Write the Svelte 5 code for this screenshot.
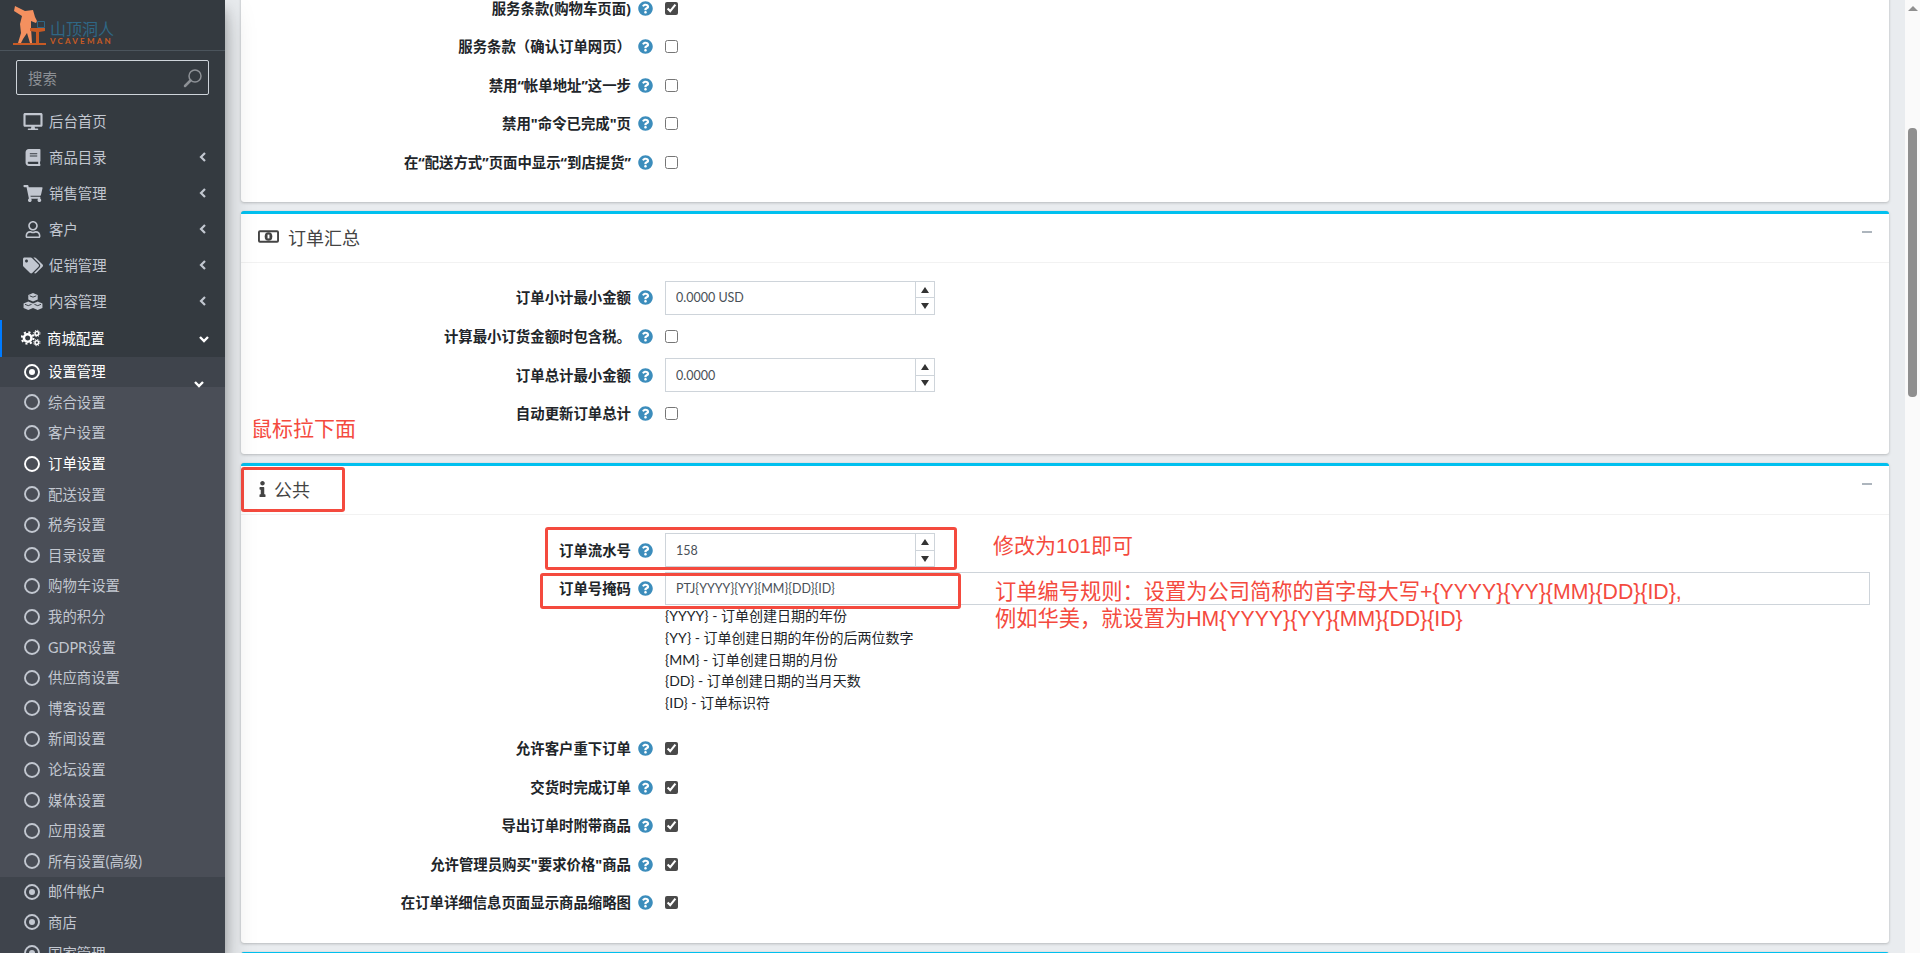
<script>
	const paths = {
		help: 'M504 256c0 136.997-111.043 248-248 248S8 392.997 8 256C8 119.083 119.043 8 256 8s248 111.083 248 248zM262.655 90c-54.497 0-89.255 22.957-116.549 63.758-3.536 5.286-2.353 12.415 2.715 16.258l34.699 26.31c5.205 3.947 12.621 3.008 16.665-2.122 17.864-22.658 30.113-35.797 57.303-35.797 20.429 0 45.698 13.148 45.698 32.958 0 14.976-12.363 22.667-32.534 33.976C247.128 238.528 216 254.941 216 296v4c0 6.627 5.373 12 12 12h56c6.627 0 12-5.373 12-12v-1.333c0-28.462 83.186-29.647 83.186-106.667 0-58.002-60.165-102-116.531-102zM256 338c-25.365 0-46 20.635-46 46 0 25.364 20.635 46 46 46s46-20.636 46-46c0-25.365-20.635-46-46-46z',
		desktop: 'M528 0H48C21.5 0 0 21.5 0 48v320c0 26.5 21.5 48 48 48h192l-16 48h-72c-13.3 0-24 10.7-24 24s10.7 24 24 24h272c13.3 0 24-10.7 24-24s-10.7-24-24-24h-72l-16-48h192c26.5 0 48-21.5 48-48V48c0-26.5-21.5-48-48-48zm-16 352H64V64h448v288z',
		book: 'M448 360V24c0-13.3-10.7-24-24-24H96C43 0 0 43 0 96v320c0 53 43 96 96 96h328c13.3 0 24-10.7 24-24v-16c0-7.5-3.5-14.3-8.9-18.7-4.2-15.4-4.2-59.3 0-74.7 5.4-4.3 8.9-11.1 8.9-18.6zM128 134c0-3.3 2.7-6 6-6h212c3.3 0 6 2.7 6 6v20c0 3.3-2.7 6-6 6H134c-3.3 0-6-2.7-6-6v-20zm0 64c0-3.3 2.7-6 6-6h212c3.3 0 6 2.7 6 6v20c0 3.3-2.7 6-6 6H134c-3.3 0-6-2.7-6-6v-20zm253.4 250H96c-17.7 0-32-14.3-32-32 0-17.6 14.4-32 32-32h285.4c-1.9 17.1-1.9 46.9 0 64z',
		cart: 'M528.12 301.319l47.273-208C578.806 78.301 567.391 64 551.99 64H159.208l-9.166-44.81C147.758 8.021 137.93 0 126.529 0H24C10.745 0 0 10.745 0 24v16c0 13.255 10.745 24 24 24h69.883l70.248 343.435C147.325 417.1 136 435.222 136 456c0 30.928 25.072 56 56 56s56-25.072 56-56c0-15.674-6.447-29.835-16.824-40h209.647C430.447 426.165 424 440.326 424 456c0 30.928 25.072 56 56 56s56-25.072 56-56c0-22.172-12.888-41.332-31.579-50.405l5.517-24.276c3.413-15.018-8.002-29.319-23.403-29.319H218.117l-6.545-32h293.145c11.206 0 20.92-7.754 23.403-18.681z',
		user: 'M313.6 304c-28.7 0-42.5 16-89.6 16-47.1 0-60.8-16-89.6-16C60.2 304 0 364.2 0 438.4V464c0 26.5 21.5 48 48 48h352c26.5 0 48-21.5 48-48v-25.6c0-74.2-60.2-134.4-134.4-134.4zM400 464H48v-25.6c0-47.6 38.8-86.4 86.4-86.4 14.6 0 38.3 16 89.6 16 51.7 0 74.9-16 89.6-16 47.6 0 86.4 38.8 86.4 86.4V464zM224 288c79.5 0 144-64.5 144-144S303.5 0 224 0 80 64.5 80 144s64.5 144 144 144zm0-240c52.9 0 96 43.1 96 96s-43.1 96-96 96-96-43.1-96-96 43.1-96 96-96z',
		tags: 'M497.941 225.941L286.059 14.059A48 48 0 0 0 252.118 0H48C21.49 0 0 21.49 0 48v204.118a48 48 0 0 0 14.059 33.941l211.882 211.882c18.744 18.745 49.136 18.746 67.882 0l204.118-204.118c18.745-18.745 18.745-49.137 0-67.882zM112 160c-26.51 0-48-21.49-48-48s21.49-48 48-48 48 21.49 48 48-21.49 48-48 48zm513.941 133.823L421.823 497.941c-18.745 18.745-49.137 18.745-67.882 0l-.36-.36L527.64 323.522c16.999-16.999 26.36-39.6 26.36-63.64s-9.362-46.641-26.36-63.64L331.397 0h48.721a48 48 0 0 1 33.941 14.059l211.882 211.882c18.745 18.745 18.745 49.137 0 67.882z',
		info: 'M20 424.229h20V279.771H20c-11.046 0-20-8.954-20-20V212c0-11.046 8.954-20 20-20h112c11.046 0 20 8.954 20 20v212.229h20c11.046 0 20 8.954 20 20V492c0 11.046-8.954 20-20 20H20c-11.046 0-20-8.954-20-20v-47.771c0-11.046 8.954-20 20-20zM96 0C56.235 0 24 32.235 24 72s32.235 72 72 72 72-32.235 72-72S135.764 0 96 0z'
	};

	const menu = [
		{ icon: 'desktop', vb: '0 0 576 512', label: '后台首页' },
		{ icon: 'book', vb: '0 0 448 512', label: '商品目录', arrow: true },
		{ icon: 'cart', vb: '0 0 576 512', label: '销售管理', arrow: true },
		{ icon: 'user', vb: '0 0 448 512', label: '客户', arrow: true },
		{ icon: 'tags', vb: '0 0 640 512', label: '促销管理', arrow: true },
		{ icon: 'cubes', vb: '0 0 20 18', label: '内容管理', arrow: true }
	];

	const settings = ['综合设置', '客户设置', '订单设置', '配送设置', '税务设置', '目录设置', '购物车设置', '我的积分', 'GDPR设置', '供应商设置', '博客设置', '新闻设置', '论坛设置', '媒体设置', '应用设置', '所有设置(高级)'];

	const checks1 = [
		{ label: '服务条款(购物车页面)', on: true },
		{ label: '服务条款（确认订单网页）', on: false },
		{ label: '禁用“帐单地址”这一步', on: false },
		{ label: '禁用"命令已完成"页', on: false },
		{ label: '在“配送方式”页面中显示“到店提货”', on: false }
	];
	const checks3 = ['允许客户重下订单', '交货时完成订单', '导出订单时附带商品', '允许管理员购买"要求价格"商品', '在订单详细信息页面显示商品缩略图'];
	const maskHelp = ['{YYYY} - 订单创建日期的年份', '{YY} - 订单创建日期的年份的后两位数字', '{MM} - 订单创建日期的月份', '{DD} - 订单创建日期的当月天数', '{ID} - 订单标识符'];
</script>

{#snippet help()}
	<svg class="help" viewBox="0 0 512 512"><path d={paths.help} fill="currentColor" /></svg>
{/snippet}

{#snippet label(text)}
	<div class="label"><span>{text}</span>{@render help()}</div>
{/snippet}

{#snippet checkRow(text, on)}
	<div class="row">
		{@render label(text)}
		<div class="field"><input type="checkbox" checked={on} /></div>
	</div>
{/snippet}

{#snippet numberRow(text, value)}
	<div class="row">
		{@render label(text)}
		<div class="field">
			<div class="number">
				<input type="text" {value} readonly />
				<div class="spin">
					<span class="up"></span>
					<span class="down"></span>
				</div>
			</div>
		</div>
	</div>
{/snippet}

{#snippet circle(dot)}
	<svg class="circle" viewBox="0 0 16 16">
		<circle cx="8" cy="8" r="7" fill="none" stroke="currentColor" stroke-width="1.9" />
		{#if dot}<circle cx="8" cy="8" r="3" fill="currentColor" />{/if}
	</svg>
{/snippet}

<div class="page">
	<aside class="sidebar">
		<div class="brand">
			<svg class="logo" viewBox="0 0 34 39">
				<path d="M2 0l10 5 8-1 2 7 2 4-1 2-5-2v7l1 15h-2l-3-10-4 6-2 4H5l3-10-1-9 2-8-8-5z" fill="#f4905f" />
				<path d="M0 37h33v2H0zM17 22h15v3l-6 1v11h-3V26l-6-1z" fill="#c85a24" />
				<path d="M24.500 15.500h7v6h-7z" fill="none" stroke="#2f6785" stroke-width="1" />
			</svg>
			<div class="brand-text">
				<span class="cn">山顶洞人</span>
				<span class="en">VCAVEMAN</span>
			</div>
		</div>

		<div class="search">
			<span>搜索</span>
			<svg viewBox="0 0 20 20"><circle cx="12" cy="8" r="6" fill="none" stroke="currentColor" stroke-width="1.500" /><path d="M7.500 12.500L2 18" stroke="currentColor" stroke-width="2.500" stroke-linecap="round" /></svg>
		</div>

		<nav>
			{#each menu as item}
				<div class="item">
					<span class="ico">
						{#if item.icon === 'cubes'}
							<svg viewBox={item.vb}>
								<path d="M10 0l5 2v5l-5 2-5-2V2zM5 9l5 2v5l-5 2-5-2v-5zM15 9l5 2v5l-5 2-5-2v-5z" fill="currentColor" />
								<path d="M6.500 3l3.500 1.400L13.500 3M1.500 12l3.500 1.400L8.500 12M11.500 12l3.500 1.400 3.500-1.400" fill="none" stroke="#343a40" stroke-width="1" />
							</svg>
						{:else}
							<svg viewBox={item.vb}><path d={paths[item.icon]} fill="currentColor" /></svg>
						{/if}
					</span>
					<span>{item.label}</span>
					{#if item.arrow}
						<svg class="chev" viewBox="0 0 8 12"><path d="M6 2L2 6l4 4" fill="none" stroke="currentColor" stroke-width="2.200" /></svg>
					{/if}
				</div>
			{/each}

			<div class="item open">
				<span class="ico">
					<svg viewBox="0 0 24 20">
						<circle cx="8" cy="10" r="4.500" fill="none" stroke="currentColor" stroke-width="3" />
						<circle cx="8" cy="10" r="7" fill="none" stroke="currentColor" stroke-width="2.400" stroke-dasharray="2.500 3" />
						<circle cx="19" cy="4.500" r="2.200" fill="none" stroke="currentColor" stroke-width="1.800" />
						<circle cx="19" cy="15.500" r="2.200" fill="none" stroke="currentColor" stroke-width="1.800" />
						<circle cx="19" cy="4.500" r="3.800" fill="none" stroke="currentColor" stroke-width="1.200" stroke-dasharray="1.500 1.500" />
						<circle cx="19" cy="15.500" r="3.800" fill="none" stroke="currentColor" stroke-width="1.200" stroke-dasharray="1.500 1.500" />
					</svg>
				</span>
				<span>商城配置</span>
				<svg class="chev-down" viewBox="0 0 12 8"><path d="M2 2l4 4 4-4" fill="none" stroke="currentColor" stroke-width="2.400" /></svg>
			</div>

			<div class="level2">
				<div class="sub active-parent">
					{@render circle(true)}
					<span>设置管理</span>
					<svg class="chev-sub" viewBox="0 0 12 8"><path d="M2 2l4 4 4-4" fill="none" stroke="currentColor" stroke-width="2.400" /></svg>
				</div>
				<div class="level3">
					{#each settings as name}
						<div class="sub" class:current={name === '订单设置'}>
							{@render circle(false)}
							<span>{name}</span>
						</div>
					{/each}
				</div>
				<div class="sub">{@render circle(true)}<span>邮件帐户</span></div>
				<div class="sub">{@render circle(true)}<span>商店</span></div>
				<div class="sub">{@render circle(true)}<span>国家管理</span></div>
			</div>
		</nav>
	</aside>

	<main class="content">
		<section class="card first">
			<div class="body">
				{#each checks1 as c}
					{@render checkRow(c.label, c.on)}
				{/each}
			</div>
		</section>

		<section class="card second">
			<header>
				<svg class="title-ico money" viewBox="0 0 22 13">
					<rect x="1" y="1" width="20" height="11" rx="1" fill="none" stroke="currentColor" stroke-width="2" />
					<ellipse cx="11" cy="6.500" rx="4" ry="4.500" fill="currentColor" />
					<rect x="10" y="4.500" width="2" height="4" fill="#fff" />
				</svg>
				<h3>订单汇总</h3>
				<span class="collapse"></span>
			</header>
			<div class="body">
				{@render numberRow('订单小计最小金额', '0.0000 USD')}
				{@render checkRow('计算最小订货金额时包含税。', false)}
				{@render numberRow('订单总计最小金额', '0.0000')}
				{@render checkRow('自动更新订单总计', false)}
			</div>
		</section>

		<section class="card third">
			<header>
				<svg class="title-ico info" viewBox="0 0 192 512"><path d={paths.info} fill="currentColor" /></svg>
				<h3>公共</h3>
				<span class="collapse"></span>
			</header>
			<div class="body">
				{@render numberRow('订单流水号', '158')}
				<div class="row mask">
					{@render label('订单号掩码')}
					<div class="field">
						<input class="text" type="text" value={'PTJ{YYYY}{YY}{MM}{DD}{ID}'} readonly />
						<div class="hint">
							{#each maskHelp as line}
								<div>{line}</div>
							{/each}
						</div>
					</div>
				</div>
				{#each checks3 as c}
					{@render checkRow(c, true)}
				{/each}
			</div>
		</section>

		<section class="card last"></section>

		<!-- annotations painted on top of the screenshot -->
		<div class="mark box-title"></div>
		<div class="mark box-serial"></div>
		<div class="mark box-mask"></div>
		<div class="note note-a">鼠标拉下面</div>
		<div class="note note-b">修改为101即可</div>
		<div class="note note-c">订单编号规则：设置为公司简称的首字母大写+{'{YYYY}{YY}{MM}{DD}{ID}'},<br />例如华美，就设置为HM{'{YYYY}{YY}{MM}{DD}{ID}'}</div>
	</main>

	<div class="scrollbar">
		<span class="arrow"></span>
		<span class="thumb"></span>
	</div>
</div>

<style>
	:global(body) {
		margin: 0;
		overflow: hidden;
		font-family: Lato, "Noto Sans CJK SC", sans-serif;
		font-size: 14.4px;
	}
	.page {
		display: flex;
		height: 953px;
		overflow: hidden;
		background: #e9ecef;
	}

	/* sidebar */
	.sidebar {
		position: relative;
		z-index: 2;
		flex: 0 0 225px;
		height: 953px;
		overflow: hidden;
		background: #343a40;
		color: #c2c7d0;
		box-shadow: 0 14px 28px rgba(0, 0, 0, 0.25), 0 10px 10px rgba(0, 0, 0, 0.22);
	}
	.brand {
		display: flex;
		height: 51px;
		box-sizing: border-box;
		padding: 6px 0 0 13px;
		border-bottom: 1px solid #4b545c;
	}
	.logo {
		width: 34px;
		height: 39px;
		flex: none;
	}
	.brand-text {
		display: flex;
		flex-direction: column;
		margin: 15px 0 0 3px;
	}
	.cn {
		font-size: 16px;
		line-height: 16px;
		color: #2f6785;
	}
	.en {
		font-size: 8px;
		line-height: 8px;
		font-weight: 700;
		letter-spacing: 2.200px;
		color: #c85a24;
	}
	.search {
		display: flex;
		align-items: center;
		justify-content: space-between;
		height: 33px;
		margin: 9px 16px 0;
		padding: 0 5px 0 11px;
		border: 1px solid #ced4da;
		border-radius: 2px;
		color: #8d9196;
	}
	.search svg {
		width: 20px;
		height: 20px;
	}
	nav {
		margin-top: 8.500px;
	}
	.item {
		position: relative;
		display: flex;
		align-items: center;
		box-sizing: border-box;
		height: 36px;
		padding: 0 0 2px 49px;
	}
	.ico {
		position: absolute;
		left: 23px;
		top: 0;
		width: 20px;
		height: 36px;
		display: flex;
		align-items: center;
		justify-content: center;
	}
	.ico svg {
		width: 20px;
		height: 17px;
	}
	.chev {
		position: absolute;
		left: 199px;
		top: 11px;
		width: 8px;
		height: 12px;
	}
	.open {
		height: 37px;
		padding-left: 45px;
		color: #fff;
		border-left: 2px solid #007bff;
	}
	.open .ico {
		left: 19px;
	}
	.open .ico svg {
		width: 22px;
		height: 18px;
	}
	.chev-down {
		position: absolute;
		left: 196px;
		top: 15px;
		width: 12px;
		height: 8px;
	}
	.level2 {
		background: #3f444c;
	}
	.sub {
		position: relative;
		display: flex;
		align-items: center;
		box-sizing: border-box;
		height: 30.6px;
		padding: 0 0 2px 48px;
	}
	.circle {
		position: absolute;
		left: 24px;
		top: 7.300px;
		width: 16px;
		height: 16px;
	}
	.active-parent {
		color: #fff;
	}
	.chev-sub {
		position: absolute;
		left: 193px;
		top: 23px;
		width: 12px;
		height: 8px;
	}
	.level3 {
		background: #4a4e57;
	}
	.current {
		color: #fff;
	}

	/* main */
	.content {
		position: relative;
		flex: 1;
		min-width: 0;
		display: flex;
		flex-direction: column;
		gap: 9px;
		padding: 0 16px;
		overflow: hidden;
		color: #212529;
	}
	.card {
		flex: none;
		background: #fff;
		border-top: 3px solid #00c0ef;
		border-radius: 3px;
		box-shadow: 0 0 1px rgba(0, 0, 0, 0.13), 0 1px 3px rgba(0, 0, 0, 0.2);
	}
	.first {
		border-top: 0;
		margin-top: -27.300px;
	}
	.last {
		height: 40px;
	}
	header {
		display: flex;
		align-items: center;
		box-sizing: content-box;
		height: 46px;
		padding: 0 17px 2px;
		border-bottom: 1px solid #f2f2f2;
	}
	h3 {
		margin: 0;
		font-size: 18px;
		font-weight: 400;
		color: #444;
	}
	.title-ico {
		flex: none;
		margin-right: 9px;
		color: #444;
	}
	.money {
		width: 21px;
		height: 13px;
	}
	.info {
		width: 7px;
		height: 16px;
		margin-left: 1px;
		margin-right: 8px;
	}
	.collapse {
		align-self: flex-start;
		width: 10px;
		height: 2px;
		margin: 17px 0 0 auto;
		background: #adb5bd;
	}
	.body {
		padding: 16px 19px 20px 0;
	}
	.second .body {
		padding-bottom: 21px;
	}
	.third .body {
		padding-bottom: 20.500px;
	}
	.row {
		display: grid;
		grid-template-columns: 412px 1fr;
		column-gap: 12px;
		height: 38.6px;
		align-items: center;
	}
	.label {
		display: flex;
		align-items: center;
		justify-content: flex-end;
		gap: 7px;
		font-family: "Noto Sans", "Noto Sans CJK SC", sans-serif;
		font-weight: 700;
		white-space: nowrap;
	}
	.label span {
		margin-bottom: 2px;
	}
	.help {
		flex: none;
		width: 15px;
		height: 15px;
		color: #3c8dbc;
	}
	.field {
		display: flex;
		align-items: center;
	}
	input[type="checkbox"] {
		width: 13px;
		height: 13px;
		margin: 0;
		accent-color: #4a4a4a;
	}
	.number {
		display: flex;
		width: 270px;
		height: 34px;
		box-sizing: border-box;
		border: 1px solid #ced4da;
	}
	input[type="text"] {
		flex: 1;
		min-width: 0;
		border: 0;
		outline: 0;
		padding: 0 0 0 10px;
		font-family: Lato, sans-serif;
		font-size: 12.500px;
		color: #495057;
		background: #fff;
	}
	.spin {
		flex: none;
		width: 18px;
		display: flex;
		flex-direction: column;
		border-left: 1px solid #ced4da;
	}
	.spin span {
		flex: 1;
		display: flex;
		align-items: center;
		justify-content: center;
	}
	.spin .up {
		border-bottom: 1px solid #ced4da;
	}
	.spin span::after {
		content: "";
		border-left: 4px solid transparent;
		border-right: 4px solid transparent;
	}
	.up::after {
		border-bottom: 6px solid #333;
	}
	.down::after {
		border-top: 6px solid #333;
	}
	.mask {
		height: auto;
		align-items: start;
		margin-bottom: 16px;
	}
	.mask .label {
		height: 38.6px;
	}
	.mask .field {
		flex-direction: column;
		align-items: stretch;
		padding-top: 2.700px;
	}
	.text {
		flex: none !important;
		height: 33px;
		box-sizing: border-box;
		border: 1px solid #ced4da !important;
	}
	.hint {
		font-size: 14px;
		line-height: 21.6px;
		color: #212529;
	}

	/* annotations */
	.mark {
		position: absolute;
		box-sizing: border-box;
		border: 3px solid #f44a3e;
		border-radius: 3px;
		pointer-events: none;
	}
	.box-title {
		left: 16px;
		top: 467px;
		width: 104px;
		height: 45px;
	}
	.box-serial {
		left: 320px;
		top: 527px;
		width: 412px;
		height: 43px;
	}
	.box-mask {
		left: 315px;
		top: 573px;
		width: 421px;
		height: 36px;
	}
	.note {
		position: absolute;
		font-family: "Liberation Sans", "Noto Sans CJK SC", sans-serif;
		font-size: 21px;
		line-height: 27px;
		color: #f44a3e;
		white-space: nowrap;
	}
	.note-a {
		left: 26px;
		top: 415px;
	}
	.note-b {
		left: 768px;
		top: 532px;
	}
	.note-c {
		left: 770px;
		top: 579px;
		font-size: 21.250px;
	}

	/* page scrollbar */
	.scrollbar {
		flex: 0 0 15px;
		display: flex;
		flex-direction: column;
		align-items: center;
		background: #fafafa;
	}
	.arrow {
		margin-top: 6px;
		border-left: 5px solid transparent;
		border-right: 5px solid transparent;
		border-bottom: 5px solid #8f8f8f;
	}
	.thumb {
		width: 9px;
		height: 269px;
		margin-top: 117px;
		border-radius: 4px;
		background: #8f8f8f;
	}
</style>
